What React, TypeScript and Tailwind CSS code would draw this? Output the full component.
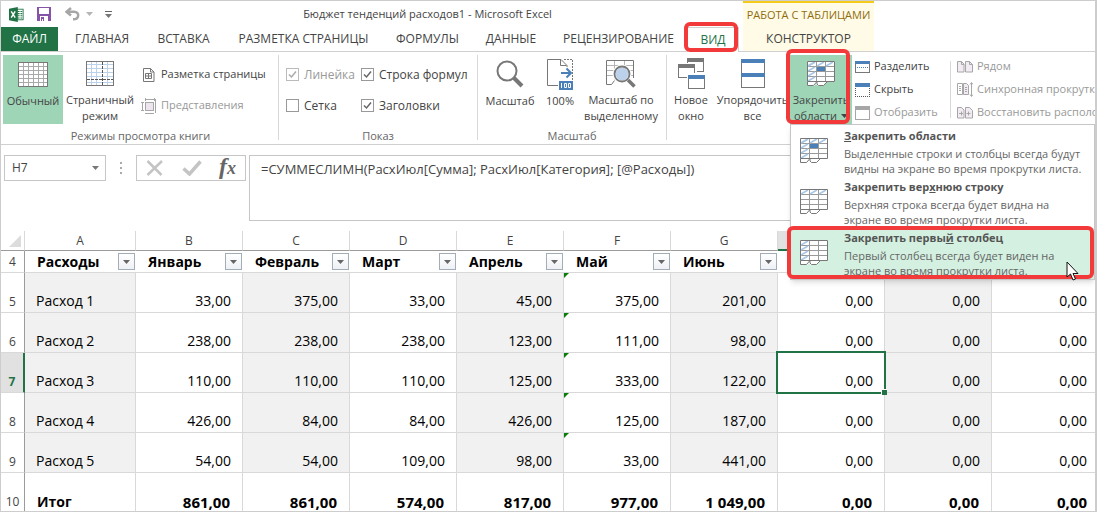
import type { ReactNode } from "react";
import clsx from "clsx";

const TABS = [
  { label: "ГЛАВНАЯ", width: "w-[82px]" },
  { label: "ВСТАВКА", width: "w-[81px]" },
  { label: "РАЗМЕТКА СТРАНИЦЫ", width: "w-[159px]" },
  { label: "ФОРМУЛЫ", width: "w-[89px]" },
  { label: "ДАННЫЕ", width: "w-[78px]" },
  { label: "РЕЦЕНЗИРОВАНИЕ", width: "w-[137px]" },
];

const COLUMNS = ["A", "B", "C", "D", "E", "F", "G", "H", "I", "J"];

const HEADINGS = [
  "Расходы",
  "Январь",
  "Февраль",
  "Март",
  "Апрель",
  "Май",
  "Июнь",
  "",
  "",
  "",
];

const ROWS = [
  { n: 5, cells: ["Расход 1", "33,00", "375,00", "33,00", "45,00", "375,00", "201,00", "0,00", "0,00", "0,00"] },
  { n: 6, cells: ["Расход 2", "238,00", "238,00", "238,00", "123,00", "111,00", "98,00", "0,00", "0,00", "0,00"] },
  { n: 7, cells: ["Расход 3", "110,00", "110,00", "110,00", "125,00", "333,00", "122,00", "0,00", "0,00", "0,00"] },
  { n: 8, cells: ["Расход 4", "426,00", "84,00", "84,00", "426,00", "125,00", "187,00", "0,00", "0,00", "0,00"] },
  { n: 9, cells: ["Расход 5", "54,00", "54,00", "109,00", "98,00", "33,00", "441,00", "0,00", "0,00", "0,00"] },
];

const TOTALS = ["Итог", "861,00", "861,00", "574,00", "817,00", "977,00", "1 049,00", "0,00", "0,00", "0,00"];

/* ---------- Icons ---------- */

const ExcelLogo = () => (
  <svg width="17" height="17" viewBox="0 0 17 17">
    <rect x="9" y="2.5" width="7" height="12" fill="#fff" stroke="#217346" />
    <path d="M10 5h2M13 5h2M10 7.5h2M13 7.5h2M10 10h2M13 10h2M10 12.5h2M13 12.5h2" stroke="#217346" strokeWidth="1.2" />
    <path d="M0 2L10 0v17L0 15z" fill="#217346" />
    <path d="M2.5 5l4.5 7M7 5l-4.5 7" stroke="#fff" strokeWidth="1.6" />
  </svg>
);

const SaveIcon = () => (
  <svg width="14" height="14" viewBox="0 0 14 14" shapeRendering="crispEdges">
    <path d="M0 0h14v14H0z" fill="#8653a8" />
    <path d="M2 1h10v6H2zM3 9h8v5H3z" fill="#fff" />
    <path d="M4 10h3v4H4z" fill="#8653a8" />
    <path d="M5 12h1v2H5z" fill="#fff" />
  </svg>
);

const UndoIcon = () => (
  <svg width="15" height="14" viewBox="0 0 15 14" fill="none" stroke="#a6a6a6" strokeWidth="2.5">
    <path d="M6 1L1.5 4.8 6 8.5" />
    <path d="M2 4.8h7c6 0 5.500 7.500-1 7.500" />
  </svg>
);

const Caret = ({ className = "text-[#777]" }: { className?: string }) => (
  <svg width="7" height="4" viewBox="0 0 7 4" className={className}>
    <path d="M0 0h7L3.500 4z" fill="currentColor" />
  </svg>
);

const NormalViewIcon = () => (
  <svg width="30" height="25" viewBox="0 0 30 25" fill="none" shapeRendering="crispEdges">
    <path d="M0 0h30v25H0z" fill="#fff" />
    <path d="M5.500 1v23M10.500 1v23M15.500 1v23M20.500 1v23M25.500 1v23M1 4.500h28M1 8.500h28M1 12.500h28M1 16.500h28M1 20.500h28" stroke="#a9a9a9" />
    <path d="M.5.500h29v24H.5z" stroke="#777" />
  </svg>
);

const PageBreakIcon = () => (
  <svg width="28" height="25" viewBox="0 0 28 25" fill="none" shapeRendering="crispEdges">
    <path d="M5.500 1v23M10.500 1v23M21.500 1v23M1 3.500h26M1 7.500h26M1 11.500h26M1 15.500h26M1 21.500h26" stroke="#bcd2ea" />
    <path d="M16.500 1v23M1 18.500h26" stroke="#555" strokeDasharray="3 1" />
    <path d="M.5.500h27v24H.5z" stroke="#777" />
  </svg>
);

const PageLayoutIcon = () => (
  <svg width="12" height="14" viewBox="0 0 12 14" fill="none" stroke="#777">
    <path d="M.5.500h7l3.500 3.500v9.500H.5z" />
    <path d="M7.500.500V4H11" />
    <path d="M2.500 5.500h6v5h-6zM5.500 5.500v5M2.500 8h6" />
  </svg>
);

const CustomViewsIcon = () => (
  <svg width="16" height="16" viewBox="0 0 16 16" fill="none" stroke="#a6a6a6" shapeRendering="crispEdges">
    <path d="M4.500 4.500h8v8h-8z" fill="#eee6ee" />
    <path d="M4 1.500h9M4 0v3M13 0v3M1.500 4v9M0 4.500h3M0 12.500h3M14.500 1v14M13 15.500H4" />
  </svg>
);

const MagnifierIcon = () => (
  <svg width="28" height="28" viewBox="0 0 28 28" fill="none" stroke="#777">
    <circle cx="11" cy="11" r="9.500" strokeWidth="2" />
    <path d="M18 18l8 8" strokeWidth="4" />
  </svg>
);

const HundredIcon = () => (
  <svg width="27" height="31" viewBox="0 0 27 31" fill="none">
    <path d="M11 26.500H.5V.500H14l6 6V8" stroke="#777" />
    <path d="M13.500.500v6h6" stroke="#777" />
    <path d="M17 .5h8.500V21" stroke="#777" strokeDasharray="2 1" />
    <path d="M14 14h9M19.500 9.500l4.500 4.500-4.500 4.500" stroke="#4a7fb8" strokeWidth="2" />
    <path d="M12 22h14v9H12z" fill="#4a7fb8" />
    <path d="M14.500 24v5M17.500 24.500h2v4h-2zM21.500 24.500h2v4h-2z" stroke="#fff" />
  </svg>
);

const ZoomSelectionIcon = () => (
  <svg width="30" height="28" viewBox="0 0 30 28" fill="none">
    <path d="M1 5.500h26M1 10.500h26M1 15.500h26M8.500 1v19M18.500 1v5" stroke="#b5b5b5" />
    <path d="M27.500 18V.500H.5v24h5l3-4" stroke="#777" />
    <circle cx="16" cy="14" r="8" fill="#bcd2ea" stroke="#fff" strokeWidth="3" />
    <circle cx="16" cy="14" r="7.500" stroke="#777" strokeWidth="1.800" />
    <path d="M22 20l6.500 6.500" stroke="#777" strokeWidth="3.500" />
  </svg>
);

const NewWindowIcon = () => (
  <svg width="27" height="31" viewBox="0 0 27 31" fill="none" shapeRendering="crispEdges">
    <path d="M9 0h17v4H9z" fill="#777" />
    <path d="M9.500 4v1M25.500 4v9.500H19" stroke="#777" />
    <path d="M0 6h17v4H0z" fill="#777" />
    <path d="M.5 10v9.500H9M16.500 10v5" stroke="#777" />
    <path d="M10 17h17v4H10z" fill="#4a7fb8" />
    <path d="M10.500 21v9.500h16V21" stroke="#777" />
  </svg>
);

const ArrangeIcon = () => (
  <svg width="24" height="29" viewBox="0 0 24 29" fill="none" shapeRendering="crispEdges">
    <path d="M.5.500h23v28H.5z" stroke="#777" />
    <path d="M0 0h24v4H0zM0 14h24v4H0z" fill="#4a7fb8" />
  </svg>
);

type FreezeKind = "panes" | "row" | "column";

const FreezeIcon = ({ kind }: { kind: FreezeKind }) => (
  <svg width="28" height="25" viewBox="0 0 28 25" fill="none">
    <path d="M0 0h28v21h-8l-4 4h-5l-2-2-2 2H0z" fill="#fff" />
    <path d="M9.500 1v20M18.500 1v20M1 5.500h26M1 10.500h26M1 15.500h26" stroke="#999" />
    {kind !== "column" && <path d="M1 5l7-4M10 5l7-4M19 5l7-4" stroke="#a9c6e6" strokeWidth="1.500" />}
    {kind !== "row" && <path d="M1 5l7-4M1 10l7-4M1 15l7-4M1 20l7-4" stroke="#a9c6e6" strokeWidth="1.500" />}
    {kind === "panes" && <path d="M10 6h8v4h-8z" fill="#4a7fb8" />}
    <path d="M.5 20.500V.500h27v20H.5v4h6l3.500-4 0 2.500 1.500 1.500h5l4-4" stroke="#777" />
  </svg>
);

const SplitIcon = () => (
  <svg width="15" height="12" viewBox="0 0 15 12" fill="none" shapeRendering="crispEdges">
    <path d="M.5.500h14v11H.5z" stroke="#777" />
    <path d="M0 0h15v3H0z" fill="#4a7fb8" />
    <path d="M2 6.500h12" stroke="#4a7fb8" strokeDasharray="1 1" />
  </svg>
);

const HideIcon = () => (
  <svg width="15" height="14" viewBox="0 0 15 14" fill="none" shapeRendering="crispEdges">
    <path d="M.5 5v8.500h14V4" stroke="#555" strokeDasharray="1 1" />
    <path d="M0 0h15v4H0z" fill="#4a7fb8" />
  </svg>
);

const UnhideIcon = () => (
  <svg width="15" height="14" viewBox="0 0 15 14" fill="none" shapeRendering="crispEdges">
    <path d="M.5.500h14v13H.5z" stroke="#a6a6a6" />
    <path d="M0 0h15v4H0z" fill="#a6a6a6" />
  </svg>
);

const SideBySideIcon = () => (
  <svg width="16" height="12" viewBox="0 0 16 12" fill="#f3ebf3" stroke="#a6a6a6">
    <path d="M.5.500h4l2.500 2.500v8H.5z" />
    <path d="M8.500.500h4L15.500 3.500v7.500h-7z" />
    <path d="M4.500.500V3.500H7M12.500.500V3.500h3" fill="none" />
  </svg>
);

const SyncScrollIcon = () => (
  <svg width="16" height="15" viewBox="0 0 16 15" fill="none" stroke="#a6a6a6">
    <path d="M.5 1.500h5v11h-5z" />
    <path d="M6.500 1.500h3l2 2v9h-5z" fill="#f3ebf3" />
    <path d="M2 4.500h2M2 6.500h2M2 8.500h2M8 5.500h2M8 7.500h2M8 9.500h2M14.500 1v13M13 2.500l1.500-2 1.500 2M13 12.500l1.500 2 1.500-2" />
  </svg>
);

const ResetPositionIcon = () => (
  <svg width="16" height="12" viewBox="0 0 16 12" fill="#f3ebf3" stroke="#a6a6a6">
    <path d="M.5.500h4l2.500 2.500v8H.5z" />
    <path d="M8.500.500h4L15.500 3.500v7.500h-7z" />
    <path d="M2 6.500h4M4.500 4.500v4M9.500 6.500h4M11.500 4.500v4" />
  </svg>
);

const CursorIcon = () => (
  <svg width="14" height="20" viewBox="0 0 14 20">
    <path d="M1 1v15l3.500-3 2.500 6 2.500-1-2.500-5.500h5z" fill="#fff" stroke="#111" />
  </svg>
);

/* ---------- Ribbon pieces ---------- */

interface BigButtonProps {
  icon: ReactNode;
  lines: ReactNode[];
  className?: string;
}

const BigButton = ({ icon, lines, className }: BigButtonProps) => (
  <button type="button" className={clsx("flex h-[69px] shrink-0 flex-col items-center whitespace-nowrap", className)}>
    <span className="flex h-[38px] items-center justify-center">{icon}</span>
    {lines.map((line, i) => (
      <span key={i} className="leading-4">
        {line}
      </span>
    ))}
  </button>
);

interface SmallButtonProps {
  icon: ReactNode;
  label: string;
  disabled?: boolean;
}

const SmallButton = ({ icon, label, disabled }: SmallButtonProps) => (
  <button
    type="button"
    disabled={disabled}
    className="flex h-[23px] items-center gap-1 whitespace-nowrap disabled:text-[#999]"
  >
    <span className="flex w-4 shrink-0 justify-center">{icon}</span>
    {label}
  </button>
);

interface CheckProps {
  label: string;
  checked?: boolean;
  disabled?: boolean;
}

const Check = ({ label, checked, disabled }: CheckProps) => (
  <label className={clsx("flex items-center gap-[5px] whitespace-nowrap", disabled && "text-[#999]")}>
    <span className="relative flex">
      <input
        type="checkbox"
        defaultChecked={checked}
        disabled={disabled}
        className="peer size-[13px] appearance-none border border-[#999] bg-white disabled:border-[#bbb]"
      />
      <svg
        width="13"
        height="13"
        viewBox="0 0 13 13"
        className="pointer-events-none absolute inset-0 hidden text-[#666] peer-checked:block peer-disabled:text-[#aaa]"
      >
        <path d="M3 6.500l2.500 2.500L10 3.500" fill="none" stroke="currentColor" strokeWidth="1.500" />
      </svg>
    </span>
    {label}
  </label>
);

interface GroupProps {
  label: string;
  className?: string;
  children: ReactNode;
}

const Group = ({ label, className, children }: GroupProps) => (
  <section className={clsx("mt-[3px] mb-1 flex shrink-0 flex-col border-r border-[#d9d9d9]", className)}>
    <div className="flex h-[73px]">{children}</div>
    <p className="-mb-1 text-center leading-4 text-[#666]">{label}</p>
  </section>
);

interface MenuItemProps {
  kind: FreezeKind;
  title: ReactNode;
  text: string;
  active?: boolean;
}

const MenuItem = ({ kind, title, text, active }: MenuItemProps) => (
  <button
    type="button"
    role="menuitem"
    className={clsx("flex h-[51px] w-full items-start gap-4 pl-[9px] text-left", active && "bg-[#d3f0e0]")}
  >
    <span className="shrink-0 pt-3">
      <FreezeIcon kind={kind} />
    </span>
    <span className="text-[#666]">
      <span className="block leading-5 font-bold text-[#555]">{title}</span>
      <span className="block leading-[15px] whitespace-pre-line">{text}</span>
    </span>
  </button>
);

const FreezeMenu = () => (
  <div
    role="menu"
    className="absolute top-full left-0 z-20 w-[305px] border border-[#c6c6c6] bg-white pt-px shadow-md"
  >
    <MenuItem
      kind="panes"
      title={
        <>
          <u>З</u>акрепить области
        </>
      }
      text={"Выделенные строки и столбцы всегда будут\nвидны на экране во время прокрутки листа."}
    />
    <MenuItem
      kind="row"
      title={
        <>
          Закрепить вер<u>х</u>нюю строку
        </>
      }
      text={"Верхняя строка всегда будет видна на\nэкране во время прокрутки листа."}
    />
    <div className="relative">
      <MenuItem
        kind="column"
        active
        title={
          <>
            Закрепить первы<u>й</u> столбец
          </>
        }
        text={"Первый столбец всегда будет виден на\nэкране во время прокрутки листа."}
      />
      <div className="pointer-events-none absolute -top-0.5 right-0 bottom-0 -left-1 rounded-md border-4 border-[#f33a3a]" />
      <div className="pointer-events-none absolute right-3.5 -bottom-0.5">
        <CursorIcon />
      </div>
    </div>
  </div>
);

const Ribbon = () => (
  <div className="flex border-b border-[#d0d0d0]">
    <Group label="Режимы просмотра книги" className="w-[278px] pl-0.5">
      <BigButton icon={<NormalViewIcon />} lines={["Обычный"]} className="w-[60px] bg-[#9fd5b7]" />
      <BigButton icon={<PageBreakIcon />} lines={["Страничный", "режим"]} className="w-[74px]" />
      <div className="flex flex-col gap-2 pt-2 pl-1">
        <SmallButton icon={<PageLayoutIcon />} label="Разметка страницы" />
        <SmallButton icon={<CustomViewsIcon />} label="Представления" disabled />
      </div>
    </Group>

    <Group label="Показ" className="w-[199px]">
      <div className="grid h-[66px] grid-cols-[75px_auto] pt-1 pl-[7px] text-xs">
        <Check label="Линейка" checked disabled />
        <Check label="Строка формул" checked />
        <Check label="Сетка" />
        <Check label="Заголовки" checked />
      </div>
    </Group>

    <Group label="Масштаб" className="w-[189px]">
      <BigButton icon={<MagnifierIcon />} lines={["Масштаб"]} className="w-16" />
      <BigButton icon={<HundredIcon />} lines={["100%"]} className="w-9" />
      <BigButton icon={<ZoomSelectionIcon />} lines={["Масштаб по", "выделенному"]} className="w-[86px]" />
    </Group>

    <section className="mt-[3px] mb-1 flex min-w-0 flex-1">
      <BigButton icon={<NewWindowIcon />} lines={["Новое", "окно"]} className="w-12" />
      <BigButton icon={<ArrangeIcon />} lines={["Упорядочить", "все"]} className="w-[75px]" />
      <div className="relative h-[69px] w-[62px] shrink-0">
        <BigButton
          icon={<FreezeIcon kind="panes" />}
          lines={[
            "Закрепить",
            <span className="flex items-center gap-1">
              области <Caret className="text-[#444]" />
            </span>,
          ]}
          className="w-full bg-[#9fd5b7]"
        />
        <div className="pointer-events-none absolute -top-1.5 right-0.5 bottom-0 -left-1 rounded-md border-4 border-[#f33a3a]" />
        <FreezeMenu />
      </div>
      <div className="flex h-[69px] w-[98px] shrink-0 flex-col pl-0.5">
        <SmallButton icon={<SplitIcon />} label="Разделить" />
        <SmallButton icon={<HideIcon />} label="Скрыть" />
        <SmallButton icon={<UnhideIcon />} label="Отобразить" disabled />
      </div>
      <div className="mt-1.5 h-[57px] border-l border-[#d9d9d9]" />
      <div className="flex h-[69px] min-w-0 flex-1 flex-col overflow-hidden pl-1.5">
        <SmallButton icon={<SideBySideIcon />} label="Рядом" disabled />
        <SmallButton icon={<SyncScrollIcon />} label="Синхронная прокрутка" disabled />
        <SmallButton icon={<ResetPositionIcon />} label="Восстановить расположение окна" disabled />
      </div>
    </section>
  </div>
);

/* ---------- Header, formula bar, grid ---------- */

const Header = () => (
  <header className="flex border-b border-[#d0d0d0]">
    <div className="flex w-[742px] shrink-0 flex-col">
      <div className="flex h-[26px] items-center">
        <div className="flex w-[111px] items-center pl-2">
          <ExcelLogo />
          <button type="button" aria-label="Сохранить" className="ml-[13px]">
            <SaveIcon />
          </button>
          <button type="button" aria-label="Отменить" className="ml-3.5 flex items-center gap-1.5">
            <UndoIcon />
            <Caret className="text-[#b5b5b5]" />
          </button>
          <button type="button" aria-label="Настройка панели" className="ml-3 flex flex-col gap-0.5">
            <span className="w-[7px] border-t border-[#666]" />
            <Caret />
          </button>
        </div>
        <h1 className="flex-1 text-center leading-4">Бюджет тенденций расходов1 - Microsoft Excel</h1>
      </div>
      <nav className="flex h-6 text-xs">
        <button type="button" className="mr-[3px] w-[57px] bg-[#217346] text-white">
          ФАЙЛ
        </button>
        {TABS.map((tab) => (
          <button key={tab.label} type="button" className={clsx("whitespace-nowrap", tab.width)}>
            {tab.label}
          </button>
        ))}
        <button
          type="button"
          className="relative -mb-px w-[52px] border border-b-0 border-[#d0d0d0] bg-white text-[#217346]"
        >
          ВИД
          <span className="pointer-events-none absolute -top-1.5 right-0 bottom-0 -left-1 rounded-md border-4 border-[#f33a3a]" />
        </button>
      </nav>
    </div>
    <div className="flex w-[131px] flex-col border-t-2 border-[#f5cb1b] bg-[#fffbe6] text-center">
      <span className="h-6 leading-6 whitespace-nowrap text-[#8f6d0f]">РАБОТА С ТАБЛИЦАМИ</span>
      <button type="button" className="h-6 text-xs">
        КОНСТРУКТОР
      </button>
    </div>
  </header>
);

const FormulaBar = () => (
  <div className="flex items-start py-2.5 pl-[3px] text-[13px]">
    <div className="flex h-[26px] w-[102px] items-center border border-[#c6c6c6] pr-1.5 pl-[7px] text-xs">
      <input aria-label="Имя" defaultValue="H7" className="w-full min-w-0 outline-none" />
      <button type="button" aria-label="Список имён">
        <Caret />
      </button>
    </div>
    <div className="flex h-[26px] w-[30px] flex-col items-center justify-center gap-[3px]">
      <span className="size-0.5 bg-[#aaa]" />
      <span className="size-0.5 bg-[#aaa]" />
      <span className="size-0.5 bg-[#aaa]" />
    </div>
    <div className="flex h-[26px] w-[110px] items-center justify-between border border-[#c6c6c6] px-[9px]">
      <button type="button" aria-label="Отмена">
        <svg width="18" height="16" viewBox="0 0 18 16" fill="none" stroke="#c4c4c4" strokeWidth="2.500">
          <path d="M1.500 1l14 14M16 1L1.500 15" />
        </svg>
      </button>
      <button type="button" aria-label="Ввод">
        <svg width="20" height="16" viewBox="0 0 20 16" fill="none" stroke="#c4c4c4" strokeWidth="3.500">
          <path d="M1.500 8.500l6 5.500L18.500 1.500" />
        </svg>
      </button>
      <button
        type="button"
        className="font-['Liberation_Serif',serif] text-2xl leading-6 font-bold text-[#666] italic"
      >
        f<span className="text-lg">x</span>
      </button>
    </div>
    <textarea
      aria-label="Строка формул"
      defaultValue="=СУММЕСЛИМН(РасхИюл[Сумма]; РасхИюл[Категория]; [@Расходы])"
      className="ml-[3px] h-[66px] min-w-0 flex-1 resize-none border border-r-0 border-[#c6c6c6] px-[11px] py-[5px] leading-4 outline-none"
    />
  </div>
);

const RowHead = ({ n, active }: { n: number; active?: boolean }) => (
  <th
    scope="row"
    className={clsx(
      "border-r border-b border-b-[#d9d9d9] p-0 pb-0.5 text-center align-bottom text-xs leading-4",
      active
        ? "border-r-2 border-r-[#217346] bg-[#e1e1e1] font-bold text-[#217346]"
        : "border-r-[#9b9b9b] font-normal text-[#444]",
    )}
  >
    {n}
  </th>
);

const Sheet = () => (
  <table className="w-full table-fixed border-separate border-spacing-0 text-sm leading-4 text-black">
    <colgroup>
      <col className="w-6" />
      <col className="w-[111px]" />
      {COLUMNS.slice(1, 9).map((c) => (
        <col key={c} className="w-[107px]" />
      ))}
      <col />
    </colgroup>
    <thead className="text-xs text-[#444]">
      <tr className="h-5">
        <td className="border-r border-b border-r-[#d9d9d9] border-b-[#9b9b9b] p-0">
          <svg width="12" height="12" viewBox="0 0 12 12" className="ml-2">
            <path d="M12 0v12H0z" fill="#dcdcdc" />
          </svg>
        </td>
        {COLUMNS.map((c) => (
          <th
            key={c}
            scope="col"
            className={clsx(
              "border-r border-r-[#d9d9d9] p-0 font-normal",
              c === "H" ? "border-b-2 border-b-[#217346] bg-[#e1e1e1]" : "border-b border-b-[#9b9b9b]",
            )}
          >
            {c}
          </th>
        ))}
      </tr>
    </thead>
    <tbody>
      <tr className="h-[22px]">
        <RowHead n={4} />
        {HEADINGS.map((h, i) => (
          <td key={i} className="border-b border-[#d9d9d9] p-0 pr-px pl-3 font-bold">
            {h && (
              <div className="flex items-center justify-between">
                {h}
                <button
                  type="button"
                  aria-label={`Фильтр: ${h}`}
                  className="flex size-[17px] items-center justify-center border border-[#a3adb8] bg-gradient-to-b from-white to-[#eef1f5]"
                >
                  <Caret className="text-[#666]" />
                </button>
              </div>
            )}
          </td>
        ))}
      </tr>
      {ROWS.map((row) => (
        <tr key={row.n} className="h-10">
          <RowHead n={row.n} active={row.n === 7} />
          {row.cells.map((cell, i) => (
            <td
              key={i}
              className={clsx(
                "relative border-r border-b border-[#d9d9d9] p-0 pb-[3px] align-bottom last:border-r-0 last:pr-2",
                i % 2 === 0 && "bg-[#f1f1f1]",
                i === 0 ? "pl-[11px]" : "pr-[11px] text-right",
              )}
            >
              {cell}
              {i === 5 && (
                <svg width="5" height="5" viewBox="0 0 5 5" className="absolute top-0 left-0">
                  <path d="M0 0h5L0 5z" fill="#0a7d0a" />
                </svg>
              )}
              {row.n === 7 && i === 7 && (
                <span className="pointer-events-none absolute -inset-0.5 z-10 border-2 border-[#217346]">
                  <span className="absolute -right-[3px] -bottom-[3px] size-1.5 border-t border-l border-white bg-[#217346]" />
                </span>
              )}
            </td>
          ))}
        </tr>
      ))}
      <tr className="h-[38px]">
        <th
          scope="row"
          className="border-r border-[#9b9b9b] p-0 pb-px text-center align-bottom text-xs leading-4 font-normal text-[#444]"
        >
          10
        </th>
        {TOTALS.map((cell, i) => (
          <td
            key={i}
            className={clsx(
              "border-r border-[#d9d9d9] p-0 pb-px align-bottom font-bold last:border-r-0 last:pr-2",
              i === 0 ? "pl-3" : "pr-3 text-right text-[15px] leading-4",
            )}
          >
            {cell}
          </td>
        ))}
      </tr>
    </tbody>
  </table>
);

export default function App() {
  return (
    <div className="min-h-screen overflow-hidden border border-r-2 border-b-2 border-[#cdcdcd] bg-white font-['Open_Sans','Noto_Sans',sans-serif] text-[11px] text-[#444]">
      <Header />
      <Ribbon />
      <FormulaBar />
      <Sheet />
    </div>
  );
}
